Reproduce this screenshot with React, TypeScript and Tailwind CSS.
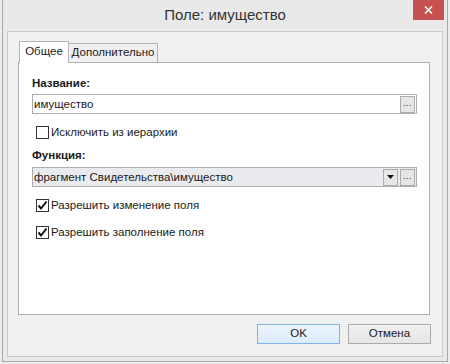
import React from "react";

const font = { fontFamily: '"Liberation Sans", Arial, sans-serif' };

function Ellipsis() {
  return (
    <div className="w-[15px] h-[17px] border border-[#acacac] bg-[#e6e6e6] flex items-center justify-center shrink-0">
      <span className="text-[9px] leading-none text-[#222] -mt-[2px] tracking-[0.5px]">...</span>
    </div>
  );
}

function Check({ checked, label }: { checked?: boolean; label: string }) {
  return (
    <div className="flex items-center h-[13px] ml-[4px]">
      <div className="w-[13px] h-[13px] border border-[#333] bg-white flex items-center justify-center shrink-0">
        {checked && (
          <svg width="11" height="11" viewBox="0 0 11 11">
            <path d="M1.5 5.5 L4 8.5 L9.5 1.5" fill="none" stroke="#111" strokeWidth="2" />
          </svg>
        )}
      </div>
      <span className="ml-[2px] text-[11.5px] text-[#1a1a1a] leading-[15px]">{label}</span>
    </div>
  );
}

export default function App() {
  return (
    <div className="w-[450px] h-[364px] bg-[#ececec] overflow-hidden" style={font}>
      <div className="relative ml-[2px] w-[446px] h-[362px] bg-[#e9e9e9] border-x border-b border-[#a9a9a9] px-[4px] pb-[4px] flex flex-col">
        {/* Title bar */}
        <div className="h-[31px] flex items-center justify-center shrink-0">
          <span className="text-[15px] text-[#333] -mt-[1px]">Поле: имущество</span>
        </div>
        <div className="absolute top-0 right-[3px] w-[31px] h-[20px] bg-[#c75050] flex items-center justify-center">
          <svg width="9" height="8" viewBox="0 0 9 8">
            <path d="M1 0.5 L8 7.5 M8 0.5 L1 7.5" stroke="#fff" strokeWidth="1.6" />
          </svg>
        </div>

        {/* Client area */}
        <div className="flex-1 bg-[#f0f0f0] border border-[#c9c9c9] pt-[9px] flex flex-col">
          {/* Tabs */}
          <div className="ml-[11px] flex items-end h-[21px]">
            <div className="w-[50px] bg-white border-l border-t border-r border-[#b4b4b4] flex items-center justify-center relative z-10 -mb-[1px] h-[22px]">
              <span className="text-[11.5px] text-[#1a1a1a] -mt-[1px]">Общее</span>
            </div>
            <div className="w-[89px] h-[19px] bg-[#f0f0f0] border-t border-r border-[#b4b4b4] flex items-center justify-center">
              <span className="text-[11.5px] text-[#1a1a1a]">Дополнительно</span>
            </div>
          </div>

          {/* Panel */}
          <div className="ml-[10px] w-[412px] h-[253px] bg-white border border-[#b0b0b0] pl-[13px] pt-[13px] flex flex-col">
            <div className="h-[15px] text-[11.5px] font-bold text-[#1a1a1a] leading-[15px]">Название:</div>
            <div className="mt-[3px] w-[385px] h-[20px] border border-[#abadb3] bg-white flex items-center pl-[1px] pr-[1px]">
              <span className="flex-1 text-[11.5px] text-[#1a1a1a] leading-[15px]">имущество</span>
              <Ellipsis />
            </div>
            <div className="mt-[12px]">
              <Check label="Исключить из иерархии" />
            </div>
            <div className="mt-[9px] h-[15px] text-[11.5px] font-bold text-[#1a1a1a] leading-[15px]">Функция:</div>
            <div className="mt-[4px] w-[385px] h-[20px] border border-[#abadb3] bg-[#eaebef] flex items-center pl-[1px] pr-[1px] gap-[2px]">
              <span className="flex-1 text-[11.5px] text-[#1a1a1a] leading-[15px]">фрагмент Свидетельства\имущество</span>
              <div className="w-[15px] h-[17px] border border-[#acacac] bg-[#e6e6e6] flex items-center justify-center shrink-0">
                <svg width="7" height="4" viewBox="0 0 7 4">
                  <path d="M0 0 H7 L3.5 4 Z" fill="#111" />
                </svg>
              </div>
              <Ellipsis />
            </div>
            <div className="mt-[12px]">
              <Check checked label="Разрешить изменение поля" />
            </div>
            <div className="mt-[14px]">
              <Check checked label="Разрешить заполнение поля" />
            </div>
          </div>

          {/* Buttons */}
          <div className="mt-[9px] flex justify-end gap-[8px] pr-[11px]">
            <button className="w-[83px] h-[20px] border border-[#7eb4ea] bg-gradient-to-b from-[#ecf4fc] to-[#dcecfc] text-[11.5px] text-[#1a1a1a] flex items-center justify-center">
              OK
            </button>
            <button className="w-[83px] h-[20px] border border-[#acacac] bg-gradient-to-b from-[#f0f0f0] to-[#e5e5e5] text-[11.5px] text-[#1a1a1a] flex items-center justify-center">
              Отмена
            </button>
          </div>
        </div>
      </div>
    </div>
  );
}
